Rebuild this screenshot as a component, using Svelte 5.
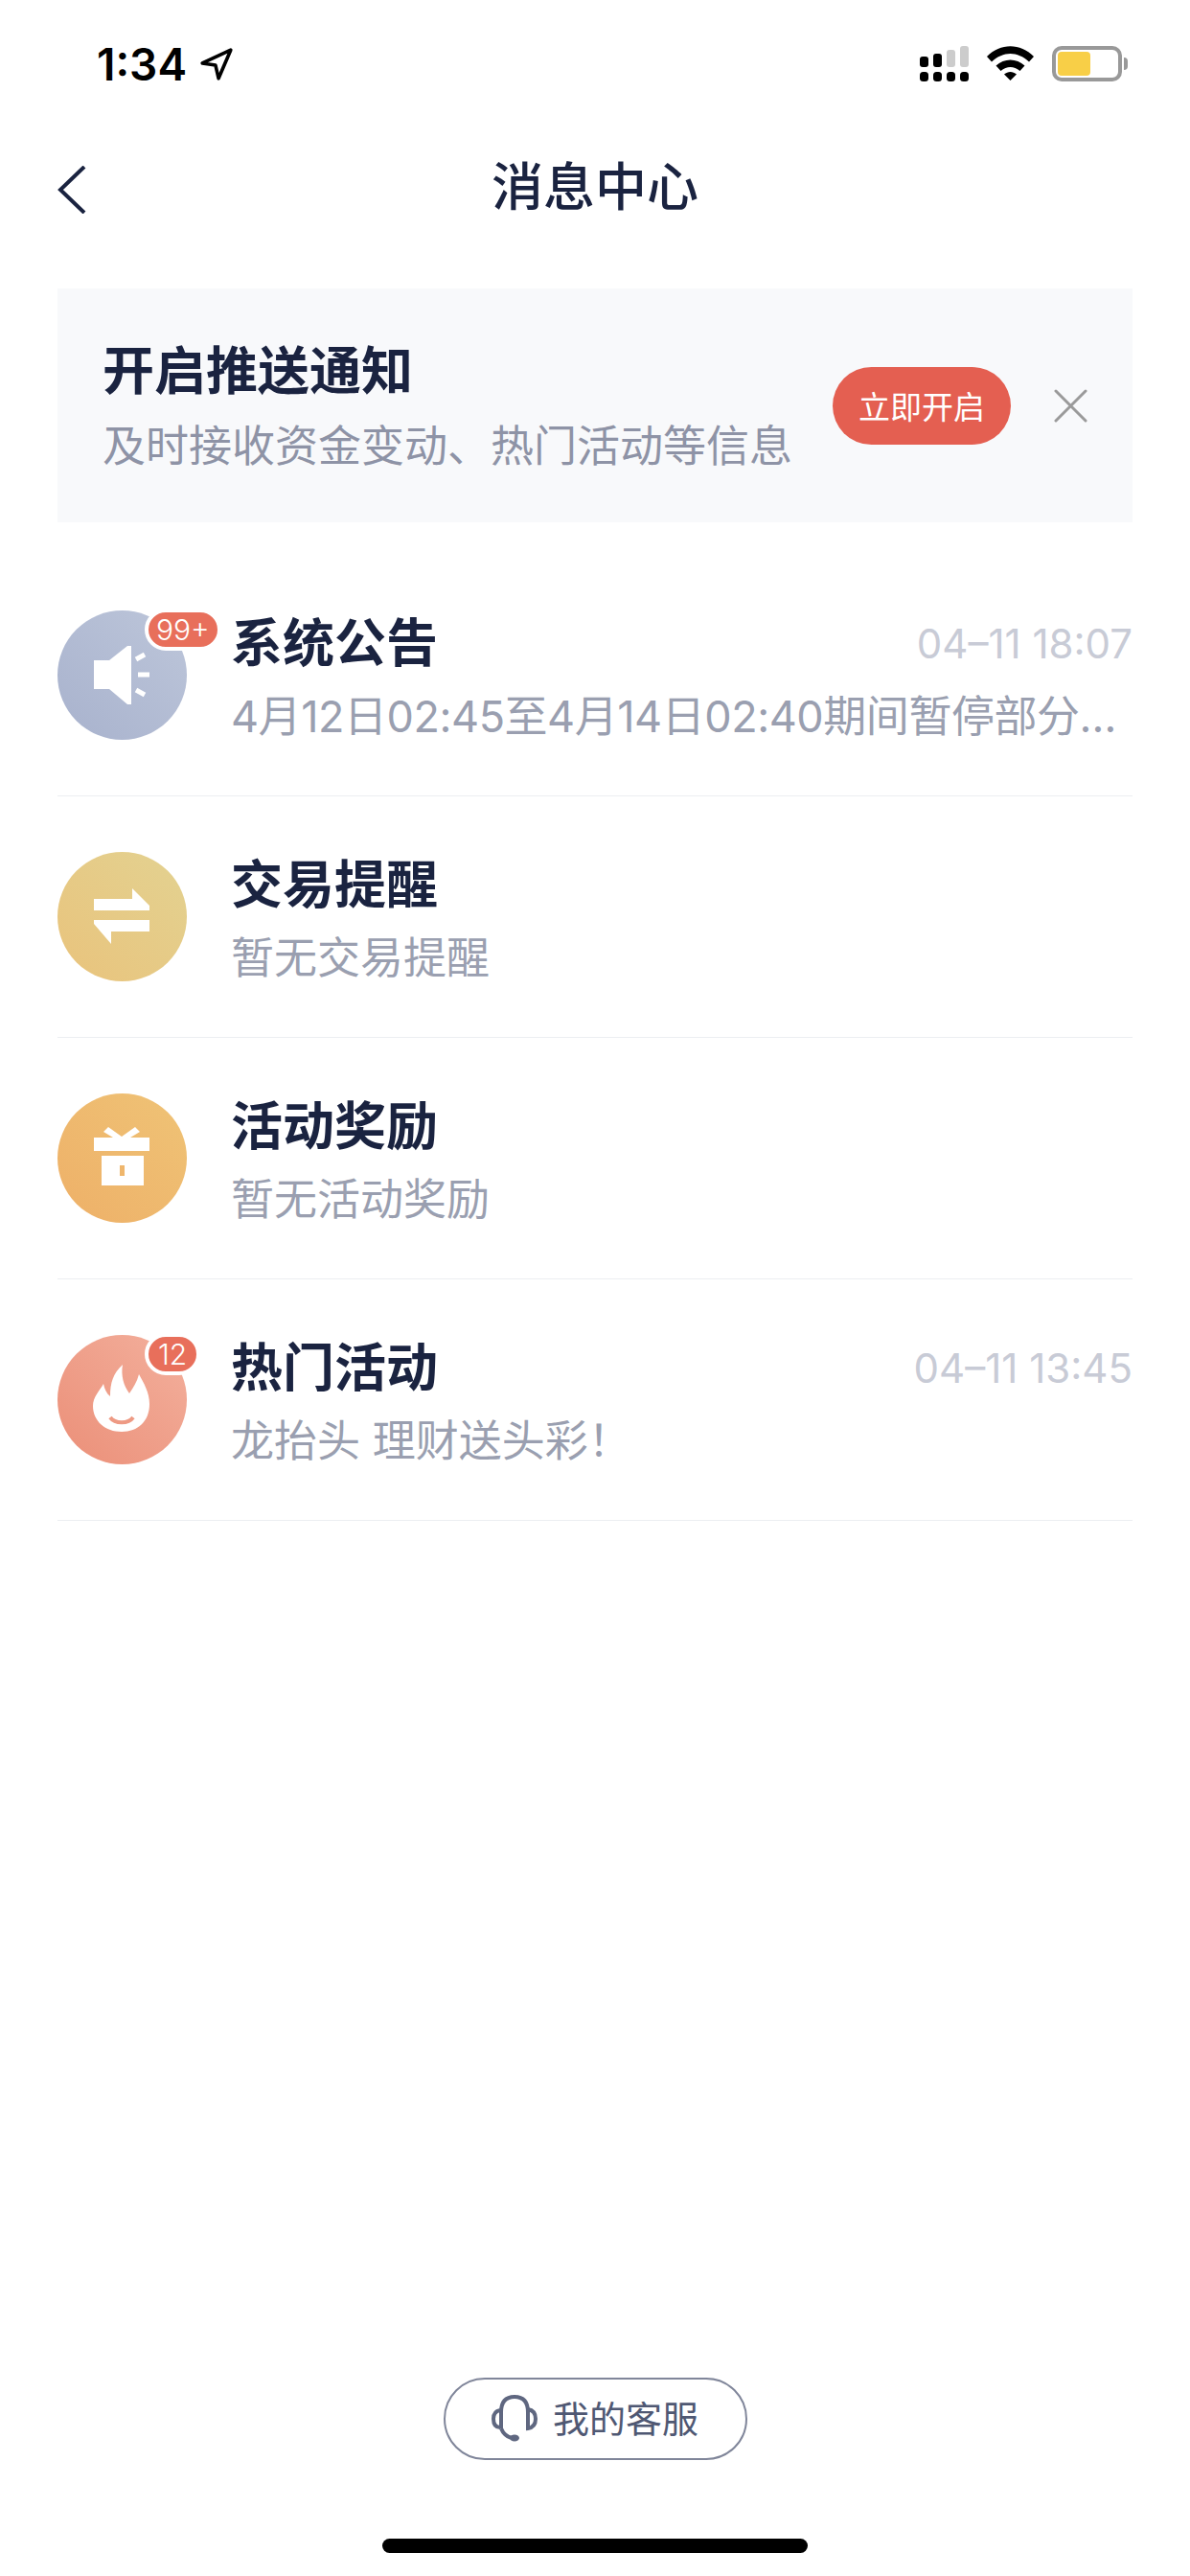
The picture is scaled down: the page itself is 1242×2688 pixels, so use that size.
<script lang="ts">
  const rows = [
    { id: 'notice', title: '系统公告', sub: '4月12日02:45至4月14日02:40期间暂停部分…', time: '04–11 18:07', badge: '99+', from: '#a8b2cd', to: '#bdc6da' },
    { id: 'trade', title: '交易提醒', sub: '暂无交易提醒', time: '', badge: '', from: '#e9c37c', to: '#e3d291' },
    { id: 'gift', title: '活动奖励', sub: '暂无活动奖励', time: '', badge: '', from: '#eeb068', to: '#efc376' },
    { id: 'hot', title: '热门活动', sub: '龙抬头 理财送头彩！', time: '04–11 13:45', badge: '12', from: '#eb8f78', to: '#f3b09d' },
  ]
</script>

<div class="page">
  <header class="status">
    <div class="status__left">
      <span class="status__time">1:34</span>
      <svg class="status__loc" width="36" height="36" viewBox="0 0 34 34">
        <path d="M31 3 L3 16 L16 18 L19 31 Z" fill="none" stroke="#000" stroke-width="3.4" stroke-linejoin="round" />
      </svg>
    </div>
    <div class="status__right">
      <svg width="51" height="37" viewBox="0 0 51 37">
        <rect x="0" y="11" width="9" height="11" rx="3" fill="#000" />
        <rect x="14" y="8" width="9" height="14" rx="3" fill="#000" />
        <rect x="28" y="4" width="9" height="18" rx="3" fill="#ccc" />
        <rect x="42" y="0" width="9" height="22" rx="3" fill="#ccc" />
        <rect x="0" y="27" width="9" height="10" rx="3.5" fill="#000" />
        <rect x="14" y="27" width="9" height="10" rx="3.5" fill="#000" />
        <rect x="28" y="27" width="9" height="10" rx="3.5" fill="#000" />
        <rect x="42" y="27" width="9" height="10" rx="3.5" fill="#000" />
      </svg>
      <svg width="49" height="36" viewBox="0 0 49 36">
        <path d="M0 11 C14 -3.500 35 -3.500 49 11 L44 16.500 C32 5 17 5 5 16.500 Z" fill="#000" />
        <path d="M9.500 20.500 C18 12.500 31 12.500 39.500 20.500 L34.500 26 C28 20.500 21 20.500 14.500 26 Z" fill="#000" />
        <path d="M18 29.500 C22 26 27 26 31 29.500 L24.500 36 Z" fill="#000" />
      </svg>
      <div class="battery">
        <div class="battery__body"><div class="battery__fill"></div></div>
        <div class="battery__nub"></div>
      </div>
    </div>
  </header>

  <nav class="nav">
    <svg class="nav__back" width="32" height="50" viewBox="0 0 32 50">
      <path d="M28 1 L3 25 L28 49" fill="none" stroke="#1a2340" stroke-width="4" />
    </svg>
    <h1 class="nav__title">消息中心</h1>
  </nav>

  <section class="banner">
    <div class="banner__info">
      <span class="banner__title">开启推送通知</span>
      <span class="banner__desc">及时接收资金变动、热门活动等信息</span>
    </div>
    <button class="banner__btn">立即开启</button>
    <svg class="banner__close" width="35" height="35" viewBox="0 0 35 35">
      <path d="M2 2 L33 33 M33 2 L2 33" stroke="#9a9a9a" stroke-width="3" stroke-linecap="round" />
    </svg>
  </section>

  <ul class="list">
    {#each rows as row}
      <li class="row">
        <div class="avatar">
          <svg width="135" height="135" viewBox="0 0 135 135">
            <defs>
              <linearGradient id="g-{row.id}" x1="0" y1="1" x2="1" y2="0">
                <stop offset="0" stop-color={row.from} />
                <stop offset="1" stop-color={row.to} />
              </linearGradient>
            </defs>
            <circle cx="67.500" cy="67.500" r="67.500" fill="url(#g-{row.id})" />
            {#if row.id === 'notice'}
              <path d="M38 52 H54 L73 37 H77 V98 H73 L54 82 H38 Z" fill="#fff" />
              <path d="M82 51 L91 46 M84 67 H96 M82 83 L91 88" stroke="#fff" stroke-width="5" />
            {:else if row.id === 'trade'}
              <path d="M38 49 H78 V38 L96 56 V61 H38 Z" fill="#fff" />
              <path d="M38 71 H96 V83 H56 V96 L38 75 Z" fill="#fff" />
            {:else if row.id === 'gift'}
              <path d="M48 40 L53 35 L67 45 L81 35 L86 40 L76 46 H58 Z" fill="#fff" />
              <rect x="38" y="46" width="58" height="14" fill="#fff" />
              <rect x="46" y="65" width="44" height="31" fill="#fff" />
              <rect x="65" y="75" width="5" height="11" fill="#efb66c" />
            {:else}
              <path d="M67 101 C50 101 37 90 37 74 C37 65 44 58 48 51 C49 56 51 61 55 64 C55 50 58 40 68 31 C66 42 69 53 75 61 C79 55 83 49 85 41 C90 50 96 60 96 72 C96 90 84 101 67 101 Z" fill="#fff" />
              <path d="M55 86 C60 93 74 93 79 86" fill="none" stroke="#ee9a84" stroke-width="4" />
            {/if}
          </svg>
          {#if row.badge}
            <span class="badge">{row.badge}</span>
          {/if}
        </div>
        <div class="row__body">
          <div class="row__top">
            <span class="row__title">{row.title}</span>
            {#if row.time}
              <span class="row__time">{row.time}</span>
            {/if}
          </div>
          <p class="row__sub" class:row__sub--tight={row.id === 'notice'}>{row.sub}</p>
        </div>
      </li>
    {/each}
  </ul>

  <footer class="foot">
    <button class="service">
      <svg width="48" height="50" viewBox="0 0 48 50">
        <path d="M10 35 V18 C10 7 15 2 24 2 C33 2 38 7 38 18 V35" fill="none" stroke="#5f6780" stroke-width="4" />
        <path d="M9 16 C3 17 2 21 2 25 C2 30 4 34 9 34" fill="none" stroke="#5f6780" stroke-width="4" />
        <path d="M38 15 C44 16 46 20 46 25 C46 30 44 34 38 35 Z" fill="none" stroke="#5f6780" stroke-width="4" />
        <path d="M10 35 C12 40 16 44 22 45" fill="none" stroke="#5f6780" stroke-width="4" />
        <ellipse cx="24" cy="45" rx="5" ry="3.500" fill="#5f6780" />
      </svg>
      <span class="service__label">我的客服</span>
    </button>
    <div class="home"></div>
  </footer>
</div>

<style>
  :global(body) {
    margin: 0;
    background: #fff;
  }

  .page {
    display: flex;
    flex-direction: column;
    min-height: 2688px;
    box-sizing: border-box;
    font-family: Inter, "Noto Sans CJK SC", sans-serif;
    color: #1a2340;
  }

  .status {
    display: flex;
    justify-content: space-between;
    align-items: flex-start;
    height: 132px;
    box-sizing: border-box;
    padding: 48px 65px 0 101px;
  }

  .status__left {
    display: flex;
    align-items: center;
    gap: 13px;
  }

  .status__time {
    font-size: 46px;
    font-weight: 600;
    line-height: 38px;
    color: #000;
  }

  .status__right {
    display: flex;
    align-items: flex-start;
    gap: 19px;
  }

  .battery {
    display: flex;
    align-items: center;
    gap: 2px;
  }

  .battery__body {
    width: 73px;
    height: 37px;
    box-sizing: border-box;
    border: 4px solid #999;
    border-radius: 10px;
    padding: 2px;
  }

  .battery__fill {
    width: 34px;
    height: 100%;
    background: #f8cf47;
    border-radius: 4px;
  }

  .battery__nub {
    width: 4px;
    height: 13px;
    background: #999;
    border-radius: 0 4px 4px 0;
  }

  .nav {
    display: flex;
    align-items: center;
    position: relative;
    justify-content: center;
    height: 128px;
  }

  .nav__back {
    position: absolute;
    left: 60px;
    top: 41px;
  }

  .nav__title {
    margin: 0;
    font-size: 54px;
    font-weight: 500;
    line-height: 72px;
  }

  .banner {
    display: flex;
    align-items: center;
    height: 244px;
    box-sizing: border-box;
    margin: 41px 60px 0;
    padding: 2px 47px 0;
    background: #f8f9fb;
  }

  .banner__info {
    display: flex;
    flex-direction: column;
    flex: 1;
    min-width: 0;
    gap: 11px;
  }

  .banner__title {
    font-size: 54px;
    font-weight: 700;
    line-height: 72px;
  }

  .banner__desc {
    font-size: 45px;
    line-height: 62px;
    color: #8e93a6;
    white-space: nowrap;
  }

  .banner__btn {
    width: 186px;
    height: 81px;
    margin-top: -2px;
    border: 0;
    border-radius: 41px;
    padding: 0;
    background: #e45f51;
    color: #fff;
    font: inherit;
    font-size: 33px;
    flex-shrink: 0;
  }

  .banner__close {
    margin-left: 45px;
    margin-top: -2px;
    flex-shrink: 0;
  }

  .list {
    list-style: none;
    margin: 34px 60px 0;
    padding: 0;
  }

  .row {
    display: flex;
    align-items: center;
    gap: 46px;
    height: 252px;
    box-sizing: border-box;
    border-bottom: 1px solid #eceef2;
  }

  .avatar {
    position: relative;
    width: 135px;
    height: 135px;
    flex-shrink: 0;
  }

  .avatar svg {
    display: block;
  }

  .badge {
    position: absolute;
    left: 91px;
    top: -2px;
    min-width: 34px;
    height: 36px;
    padding: 0 8px;
    border: 4px solid #fff;
    border-radius: 22px;
    background: #e86f5b;
    color: #fff;
    font-size: 30px;
    font-weight: 300;
    line-height: 36px;
    text-align: center;
    white-space: nowrap;
  }

  .row__body {
    flex: 1;
    min-width: 0;
    padding-top: 5px;
  }

  .row__top {
    display: flex;
    justify-content: space-between;
    align-items: center;
  }

  .row__title {
    font-size: 54px;
    font-weight: 700;
    line-height: 72px;
  }

  .row__time {
    font-size: 42px;
    color: #c8cbd6;
  }

  .row__sub {
    margin: 9px 0 0;
    font-size: 45px;
    line-height: 62px;
    color: #9a9fb0;
    white-space: nowrap;
  }

  .row__sub--tight {
    letter-spacing: -0.45px;
  }

  .foot {
    display: flex;
    flex-direction: column;
    align-items: center;
    margin-top: auto;
    padding-bottom: 24px;
  }

  .service {
    display: flex;
    align-items: center;
    justify-content: center;
    gap: 16px;
    width: 317px;
    height: 86px;
    border: 2px solid #80869a;
    border-radius: 43px;
    padding: 0;
    background: #fff;
    color: #4f5873;
    font: inherit;
    font-size: 38px;
  }

  .service__label {
    position: relative;
    top: -3px;
  }

  .home {
    width: 444px;
    height: 15px;
    margin-top: 82px;
    border-radius: 8px;
    background: #000;
  }
</style>
